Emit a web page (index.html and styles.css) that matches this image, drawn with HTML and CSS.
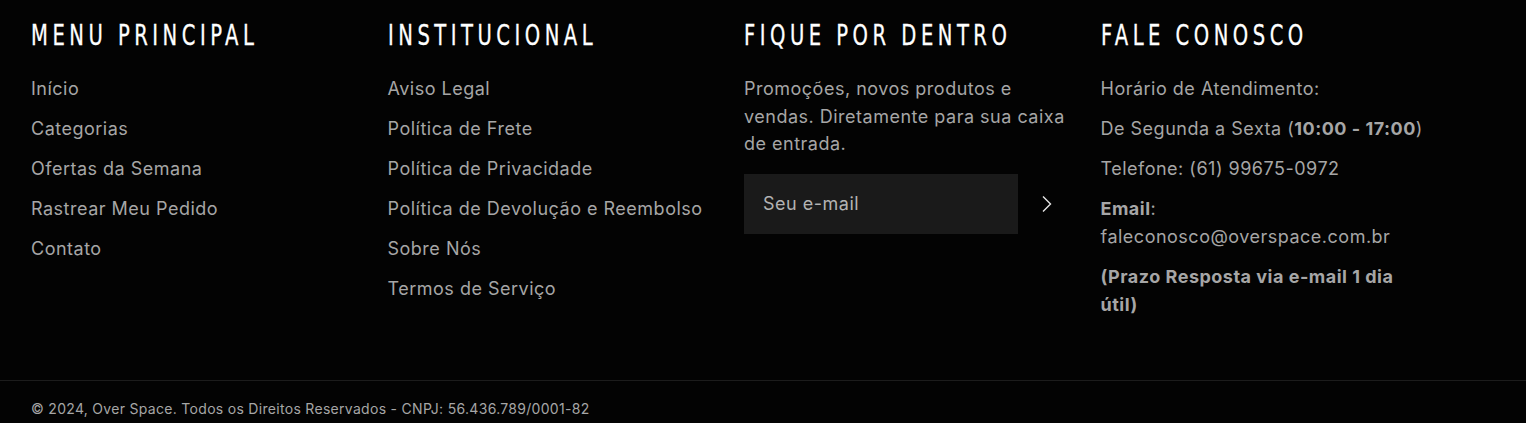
FILE: index.html
```html
<!DOCTYPE html>
<html lang="pt-BR">
<head>
  <meta charset="UTF-8">
  <meta name="viewport" content="width=device-width, initial-scale=1.0">
  <title>Over Space - Rodapé</title>
  <link rel="stylesheet" href="styles.css">
</head>
<body>
  <footer class="footer">
    <div class="footer-top">
      <div class="footer-col">
        <h2 class="footer-title">Menu Principal</h2>
        <ul class="footer-links">
          <li><a href="#">Início</a></li>
          <li><a href="#">Categorias</a></li>
          <li><a href="#">Ofertas da Semana</a></li>
          <li><a href="#">Rastrear Meu Pedido</a></li>
          <li><a href="#">Contato</a></li>
        </ul>
      </div>
      <div class="footer-col">
        <h2 class="footer-title">Institucional</h2>
        <ul class="footer-links">
          <li><a href="#">Aviso Legal</a></li>
          <li><a href="#">Política de Frete</a></li>
          <li><a href="#">Política de Privacidade</a></li>
          <li><a href="#">Política de Devolução e Reembolso</a></li>
          <li><a href="#">Sobre Nós</a></li>
          <li><a href="#">Termos de Serviço</a></li>
        </ul>
      </div>
      <div class="footer-col newsletter-col">
        <h2 class="footer-title">Fique por dentro</h2>
        <p class="newsletter-text">Promoções, novos produtos e vendas. Diretamente para sua caixa de entrada.</p>
        <form class="newsletter">
          <input type="email" placeholder="Seu e-mail">
          <button type="submit" aria-label="Inscrever">
            <svg width="12" height="18" viewBox="0 0 12 18"><path d="M2 1.5 L9.5 9 L2 16.5" fill="none" stroke="#e6e6e6" stroke-width="1.4"/></svg>
          </button>
        </form>
      </div>
      <div class="footer-col contact">
        <h2 class="footer-title">Fale conosco</h2>
        <p>Horário de Atendimento:</p>
        <p>De Segunda a Sexta (<strong>10:00 - 17:00</strong>)</p>
        <p>Telefone: (61) 99675-0972</p>
        <p><strong>Email</strong>: faleconosco@overspace.com.br</p>
        <p><strong>(Prazo Resposta via e-mail 1 dia útil)</strong></p>
      </div>
    </div>
    <div class="footer-bottom">
      <p>© 2024, Over Space. Todos os Direitos Reservados - CNPJ: 56.436.789/0001-82</p>
    </div>
  </footer>
</body>
</html>
```

FILE: styles.css
```css
body{
  margin: 0;
  background-color: #030303;
  font-family: "Inter", sans-serif;
  color: #a6a6a6;
}
.footer-top{
  display: grid;
  grid-template-columns: repeat(4, 330px);
  column-gap: 26.5px;
  padding: 18px 31px 0 31px;
  height: 380px;
  box-sizing: border-box;
}
.footer-title{
  margin: 0 0 26px 0;
  font-family: "DejaVu Sans Condensed", "DejaVu Sans", sans-serif;
  font-stretch: condensed;
  font-weight: 400;
  font-size: 29px;
  line-height: 34px;
  letter-spacing: 6px;
  text-transform: uppercase;
  color: #ffffff;
  -webkit-text-stroke: 0.3px #ffffff;
  transform: scaleX(0.75);
  transform-origin: left center;
  white-space: nowrap;
}
.newsletter-col .footer-title,
.contact .footer-title{
  margin-bottom: 23px;
}
.footer-links{
  list-style: none;
  margin: 0;
  padding: 0;
}
.footer-links li{
  font-size: 18px;
  letter-spacing: 0.5px;
  line-height: 22px;
  margin-bottom: 18px;
}
.footer-links a{
  color: #a6a6a6;
  text-decoration: none;
}
.newsletter-text{
  margin: 0 0 16px 0;
  font-size: 18px;
  letter-spacing: 0.5px;
  line-height: 27.5px;
}
.newsletter{
  display: flex;
  align-items: center;
}
.newsletter input{
  width: 274px;
  height: 60px;
  box-sizing: border-box;
  border: none;
  outline: none;
  background-color: #1a1a1a;
  padding: 0 19px;
  font-family: inherit;
  font-size: 18px;
  letter-spacing: 0.5px;
  color: #a6a6a6;
}
.newsletter input::placeholder{
  color: #b3b3b3;
}
.newsletter button{
  background: none;
  border: none;
  padding: 0;
  margin-left: 23px;
  display: flex;
  cursor: pointer;
}
.contact p{
  margin: 0 0 12px 0;
  font-size: 18px;
  letter-spacing: 0.5px;
  line-height: 28px;
}
.contact strong{
  font-weight: 700;
}
.footer-bottom{
  border-top: 1px solid #1c1c1c;
  padding: 0 31px;
}
.footer-bottom p{
  margin: 0;
  padding-top: 18px;
  font-size: 14px;
  letter-spacing: 0.3px;
  line-height: 20px;
}
```
